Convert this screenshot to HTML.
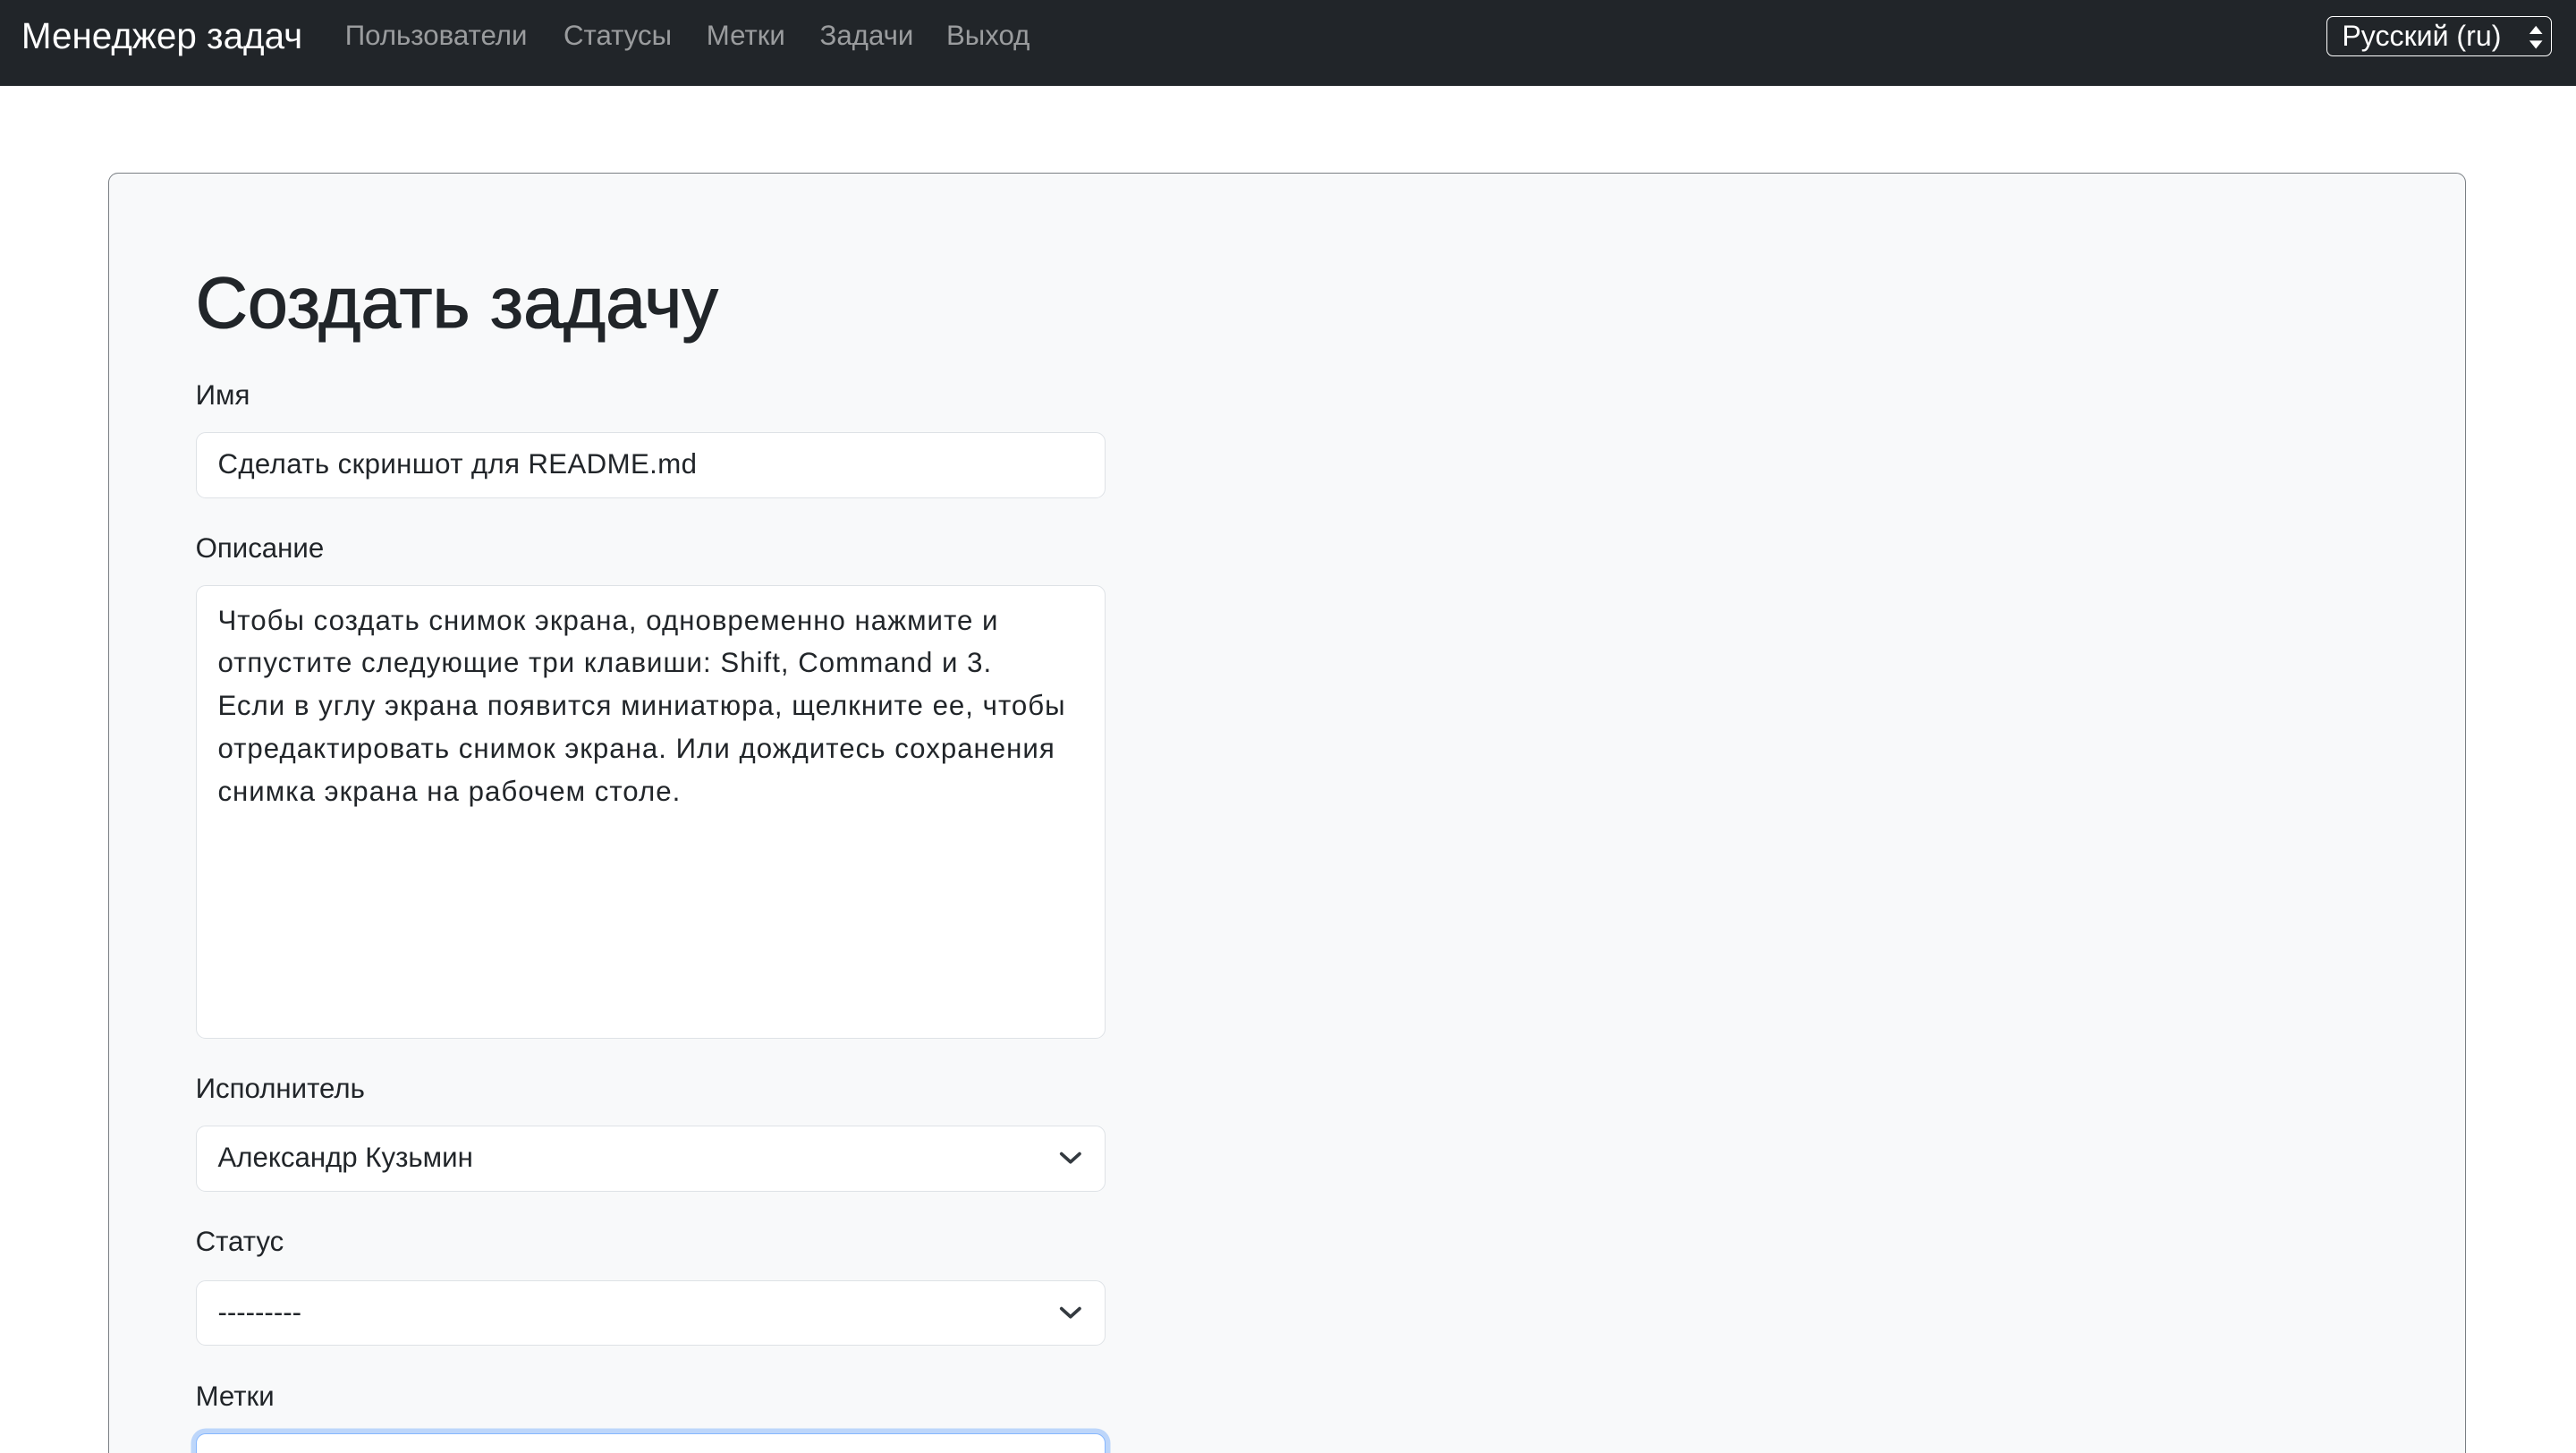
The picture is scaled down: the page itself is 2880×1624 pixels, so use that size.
<!DOCTYPE html>
<html><head><meta charset="utf-8">
<style>
html,body{margin:0;padding:0;background:#fff;overflow:hidden}
body{width:1568px;height:884px;zoom:1.83673;font-family:"Liberation Sans","Noto Sans CJK SC",sans-serif;color:#212529;position:relative}
.nav{position:absolute;left:0;top:0;width:1568px;height:52px;background:#212529}
.brand{position:absolute;left:13px;top:9px;font-size:22px;color:#fff}
.links a{position:absolute;top:12px;font-size:17px;color:rgba(255,255,255,.55);text-decoration:none}
.lang{position:absolute;left:1416px;top:10px;width:127px;height:23px;border:1px solid #fff;border-radius:4px;color:#fff;font-size:17.5px;line-height:23px;padding-left:9px;box-sizing:content-box}
.lang svg{position:absolute;right:4px;top:4px}
.card{position:absolute;left:66px;top:105px;width:1434px;height:800px;background:#f8f9fa;border:1px solid #7a7f84;border-radius:6px}
h1{position:absolute;left:119px;top:158px;margin:0;font-size:44px;font-weight:400;line-height:54px;-webkit-text-stroke:0.6px #212529}
.lbl{position:absolute;left:119px;font-size:17px;line-height:20px}
.inp{position:absolute;left:119px;width:554px;height:39px;background:#fff;border:1px solid #dee2e6;border-radius:6px;box-sizing:border-box;font-size:17px;padding-left:13px;line-height:38px}
.ta{height:276px;line-height:26px;padding-top:8px;letter-spacing:0.55px}
.chev{position:absolute;right:14px;top:14px}
</style></head><body>
<div class="nav">
<div class="brand">Менеджер задач</div>
<div class="links"><a style="left:210px">Пользователи</a><a style="left:343px">Статусы</a><a style="left:430px">Метки</a><a style="left:499px">Задачи</a><a style="left:576px">Выход</a></div>
<div class="lang">Русский (ru)<svg width="10" height="16" viewBox="0 0 10 16"><path d="M1 6L5 1L9 6Z M1 10L5 15L9 10Z" fill="#fff"/></svg></div>
</div>
<div class="card"></div>
<h1>Создать задачу</h1>
<div class="lbl" style="top:231px">Имя</div>
<div class="inp" style="top:263px;height:40px;letter-spacing:0.2px">Сделать скриншот для README.md</div>
<div class="lbl" style="top:324px">Описание</div>
<div class="inp ta" style="top:356px">Чтобы создать снимок экрана, одновременно нажмите и<br>отпустите следующие три клавиши: Shift, Command и 3.<br>Если в углу экрана появится миниатюра, щелкните ее, чтобы<br>отредактировать снимок экрана. Или дождитесь сохранения<br>снимка экрана на рабочем столе.</div>
<div class="lbl" style="top:653px">Исполнитель</div>
<div class="inp" style="top:685px;height:40px">Александр Кузьмин<svg class="chev" width="14" height="10" viewBox="0 0 14 10"><path d="M1.5 2.5L7 7.5L12.5 2.5" stroke="#343a40" stroke-width="2" fill="none" stroke-linecap="round" stroke-linejoin="round"/></svg></div>
<div class="lbl" style="top:746px">Статус</div>
<div class="inp" style="top:779px;height:40px">---------<svg class="chev" width="14" height="10" viewBox="0 0 14 10"><path d="M1.5 2.5L7 7.5L12.5 2.5" stroke="#343a40" stroke-width="2" fill="none" stroke-linecap="round" stroke-linejoin="round"/></svg></div>
<div class="lbl" style="top:840px">Метки</div>
<div class="inp" style="top:872px;height:40px;border-color:#86b7fe;box-shadow:0 0 0 3px rgba(13,110,253,.25)"></div>
</body></html>
